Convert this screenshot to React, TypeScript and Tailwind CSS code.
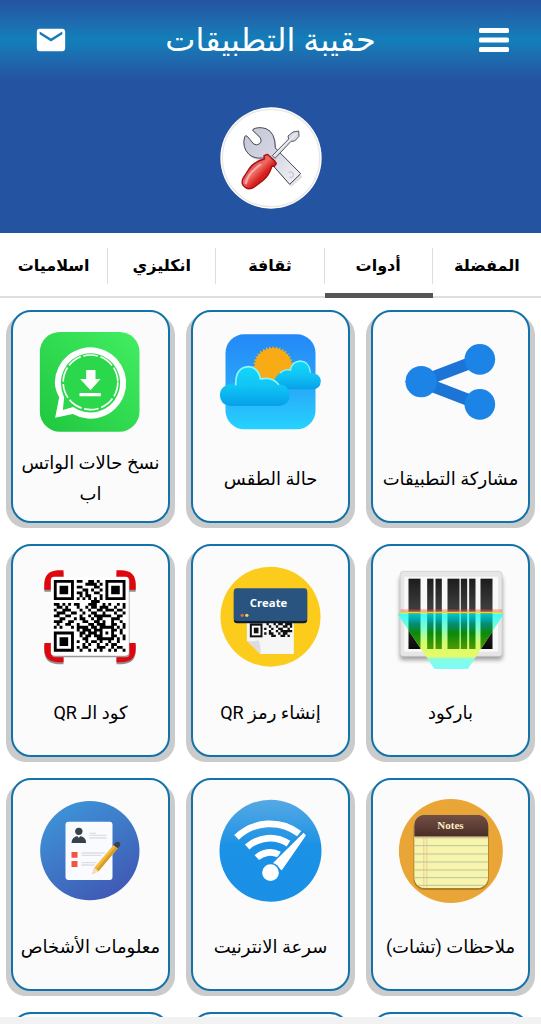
import React, { useState } from 'react';
import { MdMail } from 'react-icons/md';

interface Tool {
  id: string;
  label: string;
  icon: React.FC;
}

const TABS = ['المفضلة', 'أدوات', 'ثقافة', 'انكليزي', 'اسلاميات'];

const QR_ROWS = [
  '1111111011001101001111111',
  '1000001000011110101000001',
  '1011101011000011001011101',
  '1011101000110100101011101',
  '1011101011010011001011101',
  '1000001001011000101000001',
  '1111111010101010101111111',
  '0000000000000111000000000',
  '1101010110001110010100101',
  '0110100010010110111001001',
  '1001110001001001101110110',
  '0111001100100110010001001',
  '1100110001001011111100110',
  '0011000101100101100011100',
  '1110011000110011010010010',
  '0100110010001101110011001',
  '1010001011110110111110101',
  '0000000010111011100011010',
  '1111111001101110101010010',
  '1000001001011011100011001',
  '1011101000110001111110101',
  '1011101010010110100100100',
  '1011101000101001001011000',
  '1000001010110001110010110',
  '1111111001001010100101001',
];

const qrPath = (rows: string[], x: number, y: number, size: number) =>
  rows
    .map((row, r) =>
      row
        .split('')
        .map((c, i) => (c === '1' ? `M${x + i * size} ${y + r * size}h${size}v${size}h-${size}z` : ''))
        .join('')
    )
    .join('');

const MenuIcon = () => (
  <svg viewBox="0 0 30 24" className="w-[30px] h-6 fill-white">
    <rect y="0" width="30" height="5" rx="1.5" />
    <rect y="9.5" width="30" height="5" rx="1.5" />
    <rect y="19" width="30" height="5" rx="1.5" />
  </svg>
);

const ToolsBadge = () => (
  <svg viewBox="30 34 306 306" className="w-[102px] h-[102px]">
    <defs>
      <linearGradient id="steel" x1="0" y1="0" x2="1" y2="1">
        <stop offset="0" stopColor="#c3c5d6" />
        <stop offset=".5" stopColor="#d5d6e2" />
        <stop offset="1" stopColor="#f4f4fa" />
      </linearGradient>
      <linearGradient id="handle" x1="0" y1="0" x2="1" y2="1">
        <stop offset="0" stopColor="#c8151a" />
        <stop offset=".45" stopColor="#ee6b62" />
        <stop offset=".6" stopColor="#d8211f" />
        <stop offset="1" stopColor="#a50c12" />
      </linearGradient>
    </defs>
    <circle cx="183" cy="187" r="152" fill="#fff" />
    <circle cx="183" cy="187" r="146" fill="none" stroke="#eae6e1" strokeWidth="4" />
    <path d="M104 126 Q97 158 117 178 Q133 193 158 190 L170 188 L240 270 L275 240 L196 160 Q197 112 168 100 Q145 92 129 101 Q127 107 132 109 L151 128 Q157 140 149 146 Q140 153 131 147 L112 124 Q108 120 104 126Z" fill="#999" opacity=".3" transform="translate(3 4)" />
    <path d="M104 123 Q95 155 117 176 Q133 190 158 187 L168 186 L239 266 L272 234 L196 157 Q196 110 168 99 Q145 92 129 101 Q126 105 132 108 L151 126 Q157 138 149 144 Q140 151 131 145 L112 122 Q107 118 104 123Z" fill="url(#steel)" stroke="#444650" strokeWidth="3" strokeLinejoin="round" />
    <path d="M236 232a8 8 0 1 1 2 12" fill="none" stroke="#c9c9d6" strokeWidth="4" />
    <path d="M187 180 L236 130 L234 121 L249 109 L266 106 L267 122 L254 136 L243 137 L195 188Z" fill="#d9dce2" stroke="#55585f" strokeWidth="3" strokeLinejoin="round" />
    <path d="M192 180 L245 127 L260 113" fill="none" stroke="#f7f7fa" strokeWidth="3" />
    <path d="M162 180 L172 176 L179 182 L195 197 L199 204 L193 212 L186 211 Q178 239 158 255 L133 274 Q119 284 107 276 Q91 266 99 248 L117 220 Q133 197 163 190Z" fill="url(#handle)" stroke="#a50c14" strokeWidth="4" strokeLinejoin="round" />
    <path d="M108 262 Q112 235 151 207" fill="none" stroke="#fff" strokeWidth="7" strokeLinecap="round" opacity=".45" />
  </svg>
);

const StatusSaverIcon = () => (
  <svg viewBox="115.5 93 312 312" className="w-[104px] h-[104px]">
    <defs>
      <linearGradient id="green" x1="1" y1="0" x2="0" y2="1">
        <stop offset="0" stopColor="#43ee62" />
        <stop offset="1" stopColor="#1fc73f" />
      </linearGradient>
    </defs>
    <rect x="118" y="96" width="299" height="299" rx="60" fill="url(#green)" />
    <path d="M176 292 Q163 268 163 247 A107 107 0 1 1 217 342 L164 353Z" fill="#fff" />
    <path d="M191 293 Q181 270 181 247 A89 89 0 1 1 218 321 L187 330Z" fill="#2bd84c" />
    <circle cx="270" cy="247" r="82" fill="none" stroke="#fff" strokeWidth="5" strokeDasharray="44 8" />
    <path d="M257 210h28v27h15l-30 34-31-34h18z M237 279h64v10h-64z" fill="#fff" />
  </svg>
);

const SUN_RAYS = Array.from({ length: 36 }, (_, i) => i * 10);

const WeatherIcon = () => (
  <svg viewBox="115.5 93 312 312" className="w-[104px] h-[104px]">
    <defs>
      <linearGradient id="sky" x1="0" y1="0" x2="0" y2="1">
        <stop offset="0" stopColor="#2388f8" />
        <stop offset=".5" stopColor="#2aa3f8" />
        <stop offset="1" stopColor="#25d2ff" />
      </linearGradient>
      <linearGradient id="cloud" x1="0" y1="0" x2="0" y2="1">
        <stop offset="0" stopColor="#12d8fb" />
        <stop offset=".5" stopColor="#10c4f4" />
        <stop offset="1" stopColor="#06a0e8" />
      </linearGradient>
    </defs>
    <rect x="135" y="103" width="270" height="285" rx="56" fill="url(#sky)" />
    <circle cx="278" cy="200" r="55" fill="#f8ab14" />
    {SUN_RAYS.map(a => (
      <path key={a} d="M273 148l5-10 5 10z" fill="#f8ab14" transform={`rotate(${a} 278 200)`} />
    ))}
    <path d="M285 268 Q270 240 300 217 Q315 205 330 210 Q334 184 360 183 Q386 184 390 218 Q419 219 421 243 Q420 267 396 268Z" fill="url(#cloud)" />
    <path d="M298 219 Q315 205 330 210 Q334 184 360 183 Q386 184 390 218" fill="none" stroke="#8ff4fb" strokeWidth="4" />
    <path d="M150 318 Q119 315 118 285 Q119 253 165 249 Q165 201 204 199 Q236 201 242 235 Q275 228 296 253 Q327 255 328 285 Q326 316 296 318Z" fill="url(#cloud)" />
    <path d="M166 256 Q163 202 204 200 Q233 202 240 237 Q275 229 295 254" fill="none" stroke="#8ff4fb" strokeWidth="5" />
  </svg>
);

const ShareIcon = () => (
  <svg viewBox="115.5 93 312 312" className="w-[104px] h-[104px]">
    <path d="M358 178L182 245L358 313" fill="none" stroke="#1b74d6" strokeWidth="36" />
    <g fill="#1c84e7">
      <circle cx="182" cy="245" r="47" />
      <circle cx="358" cy="178" r="46" />
      <circle cx="358" cy="313" r="46" />
    </g>
  </svg>
);

const QrCodeIcon = () => (
  <svg viewBox="115.5 75 312 312" className="w-[104px] h-[104px]">
    {['#8f8f8f', '#e0060e'].map((color, i) => (
      <g key={color} fill="none" stroke={color} strokeWidth="21" transform={i ? '' : 'translate(0 6)'}>
        <path d="M189 101H172Q142 103 142 132V149" />
        <path d="M348 101H365Q395 103 395 132V149" />
        <path d="M189 356H172Q142 354 142 326V309" />
        <path d="M348 356H365Q395 354 395 326V309" />
      </g>
    ))}
    <rect x="154" y="114" width="233" height="238" rx="10" fill="#999" />
    <rect x="151" y="110" width="234" height="237" rx="10" fill="#fff" />
    <path d={qrPath(QR_ROWS, 160, 120, 8.6)} fill="#000" />
  </svg>
);

const CreateQrIcon = () => (
  <svg viewBox="115.5 75 312 312" className="w-[104px] h-[104px]">
    <circle cx="270" cy="230" r="150" fill="#fccc1d" />
    <path d="M199 240H340V342H240L199 302Z" fill="#f7f6f7" />
    <path d="M199 302Q225 306 234 300Q241 315 240 342Z" fill="#dddcdf" />
    <path d={qrPath(QR_ROWS.slice(8, 15).map(r => r.slice(7, 19)), 251, 242, 7)} fill="#111" />
    <path d="M208 250H246V292H208Z" fill="#111" />
    <path d="M214 257H240V286H214Z" fill="#fff" />
    <path d="M220 263H234V280H220Z" fill="#111" />
    <rect x="160" y="150" width="220" height="100" rx="10" fill="#101c29" />
    <rect x="160" y="145" width="220" height="98" rx="9" fill="#29547f" />
    <circle cx="185" cy="226" r="5" fill="#dc6b4a" />
    <circle cx="199" cy="226" r="5" fill="#f3d54b" />
    <text x="264" y="200" textAnchor="middle" className="fill-white font-['Open_Sans',sans-serif] text-[34px] font-bold">Create</text>
  </svg>
);

const BARS = [
  [144, 36],
  [200, 19],
  [225, 19],
  [261, 36],
  [301, 19],
  [326, 19],
  [360, 36],
];

const BarcodeIcon = () => (
  <svg viewBox="115.5 75 312 312" className="w-[104px] h-[104px] overflow-visible">
    <defs>
      <linearGradient id="beam" x1="0" y1="0" x2="0" y2="1">
        <stop offset="0" stopColor="#3ffbfb" />
        <stop offset=".25" stopColor="#7dfcd0" />
        <stop offset=".5" stopColor="#d3fb72" />
        <stop offset=".77" stopColor="#e6fc66" />
        <stop offset=".82" stopColor="#84fbe6" />
        <stop offset="1" stopColor="#7dfcf6" />
      </linearGradient>
      <linearGradient id="beamBars" x1="0" y1="0" x2="0" y2="1">
        <stop offset="0" stopColor="#00c4cf" />
        <stop offset=".3" stopColor="#068a72" />
        <stop offset=".55" stopColor="#0b8a08" />
        <stop offset="1" stopColor="#4f9a05" />
      </linearGradient>
      <linearGradient id="ink" x1="0" y1="0" x2="0" y2="1">
        <stop offset="0" stopColor="#1c1c1c" />
        <stop offset=".4" stopColor="#3c3c3c" />
        <stop offset="1" stopColor="#0a0a0a" />
      </linearGradient>
      <clipPath id="beamShape">
        <path d="M111 222H430L322 387H222Z" />
      </clipPath>
      <filter id="soft">
        <feGaussianBlur stdDeviation="6" />
      </filter>
    </defs>
    <rect x="118" y="110" width="308" height="250" rx="10" fill="#777" filter="url(#soft)" opacity=".7" />
    <rect x="119" y="94" width="306" height="255" rx="10" fill="#e6e6e6" stroke="#c9c9c9" strokeWidth="2" />
    <rect x="131" y="110" width="282" height="225" fill="#f8f8f8" />
    {BARS.map(([x, w]) => (
      <rect key={x} x={x} y="116" width={w} height="211" fill="url(#ink)" />
    ))}
    <rect x="120" y="208" width="305" height="8" fill="#f55" opacity=".45" />
    <rect x="115" y="215" width="312" height="6" fill="#c9e04c" />
    <g clipPath="url(#beamShape)">
      <rect x="111" y="222" width="319" height="165" fill="url(#beam)" />
      {BARS.map(([x, w]) => (
        <rect key={x} x={x} y="222" width={w} height="105" fill="url(#beamBars)" />
      ))}
    </g>
  </svg>
);

const PeopleIcon = () => (
  <svg viewBox="115.5 75 312 312" className="w-[104px] h-[104px]">
    <defs>
      <linearGradient id="peopleBg" x1=".1" y1="0" x2=".7" y2="1">
        <stop offset="0" stopColor="#3d98da" />
        <stop offset="1" stopColor="#4059b4" />
      </linearGradient>
    </defs>
    <circle cx="268" cy="230" r="149" fill="url(#peopleBg)" />
    <rect x="195" y="143" width="141" height="175" rx="9" fill="#fafbfe" />
    <circle cx="235" cy="172" r="11" fill="#37424f" />
    <path d="M213 207Q213 187 235 186Q257 187 257 207Z" fill="#37424f" />
    <path d="M231 186h8l-4 6z" fill="#fff" />
    <path d="M213 234h18v17h-18zM213 261h18v18h-18z" fill="#ef5540" />
    <path d="M267 178h20M267 184h51M267 192h51M243 237h71M243 244h60M243 266h45M243 273h40" stroke="#dcdee4" strokeWidth="4" />
    <path d="M275 301L281 281L339 213L352 223L294 292Z" fill="#f2bd3c" />
    <path d="M288 286L345 218L352 223L294 292Z" fill="#dc9c29" />
    <path d="M275 301L281 281L294 292Z" fill="#f4dccb" />
    <path d="M339 213L346 205Q353 201 358 206Q361 211 358 216L352 223Z" fill="#3c4150" />
  </svg>
);

const SpeedIcon = () => (
  <svg viewBox="115.5 75 312 312" className="w-[104px] h-[104px]">
    <defs>
      <linearGradient id="speedBg" x1="0" y1="0" x2="0" y2="1">
        <stop offset="0" stopColor="#56a9e4" />
        <stop offset=".45" stopColor="#1b92e6" />
        <stop offset="1" stopColor="#1990e6" />
      </linearGradient>
    </defs>
    <circle cx="270" cy="230" r="153" fill="url(#speedBg)" />
    <g fill="none" stroke="#fff" strokeWidth="20">
      <path d="M168 190A145 145 0 0 1 356 179" />
      <path d="M200 219A102 102 0 0 1 324 209" />
      <path d="M229 251A58 58 0 0 1 296 242" />
    </g>
    <path d="M274 268L369 173L379 184L304 292Z" fill="#fff" stroke="#1b92e6" strokeWidth="4" />
    <circle cx="270" cy="296" r="30" fill="#1b92e6" />
    <circle cx="270" cy="296" r="25" fill="#fff" />
  </svg>
);

const NotesIcon = () => (
  <svg viewBox="115.5 75 312 312" className="w-[104px] h-[104px]">
    <defs>
      <linearGradient id="leather" x1="0" y1="0" x2="0" y2="1">
        <stop offset="0" stopColor="#735044" />
        <stop offset="1" stopColor="#4b2d27" />
      </linearGradient>
      <clipPath id="pad">
        <rect x="161" y="122" width="222" height="220" rx="32" />
      </clipPath>
    </defs>
    <circle cx="271" cy="231" r="156" fill="#eaa537" />
    <rect x="159" y="128" width="226" height="220" rx="34" fill="#8a6022" opacity=".6" />
    <g clipPath="url(#pad)">
      <rect x="161" y="122" width="222" height="220" fill="#f8f4ae" />
      <rect x="161" y="122" width="222" height="66" fill="url(#leather)" />
      <path d="M161 191H383" stroke="#d3cf94" strokeWidth="5" />
      <path d="M161 215H383M161 240H383M161 264H383M161 288H383M161 311H383M161 334H383" stroke="#b4c69b" strokeWidth="3" />
      <path d="M190 192V342M199 192V342" stroke="#e3b98a" strokeWidth="2" />
    </g>
    <text x="270" y="166" textAnchor="middle" className="fill-[#fbeec4] font-['Liberation_Serif',serif] text-[33px] font-bold">Notes</text>
  </svg>
);

const TOOLS: Tool[] = [
  { id: 'share', label: 'مشاركة التطبيقات', icon: ShareIcon },
  { id: 'weather', label: 'حالة الطقس', icon: WeatherIcon },
  { id: 'status', label: 'نسخ حالات الواتس اب', icon: StatusSaverIcon },
  { id: 'barcode', label: 'باركود', icon: BarcodeIcon },
  { id: 'create-qr', label: 'إنشاء رمز QR', icon: CreateQrIcon },
  { id: 'qr', label: 'كود الـ QR', icon: QrCodeIcon },
  { id: 'notes', label: 'ملاحظات (تشات)', icon: NotesIcon },
  { id: 'speed', label: 'سرعة الانترنيت', icon: SpeedIcon },
  { id: 'people', label: 'معلومات الأشخاص', icon: PeopleIcon },
];

const CARD = 'h-[213px] rounded-[20px] border-2 border-[#1273aa] bg-[#fbfbfb] shadow-[-5px_5px_0_#cbcbcb,5px_5px_0_#cbcbcb]';

const ToolCard: React.FC<{ tool: Tool }> = ({ tool }) => {
  const Icon = tool.icon;
  return (
    <button className={`${CARD} flex flex-col items-center px-1 pt-[19px]`}>
      <Icon />
      <span className="mt-[11px] h-16 flex items-center text-center text-[18px] leading-[31px] text-black">
        {tool.label}
      </span>
    </button>
  );
};

export default function App() {
  const [active, setActive] = useState(1);

  return (
    <div dir="rtl" className="h-screen flex flex-col bg-white font-[Roboto,'DejaVu_Sans',sans-serif]">
      <header className="shrink-0 bg-[#2453a1]">
        <div className="h-20 px-8 flex items-center justify-between bg-linear-to-b from-[#2453a1] via-[#127fba] to-[#2453a1]">
          <button aria-label="القائمة" className="w-9 flex">
            <MenuIcon />
          </button>
          <h1 className="text-[32px] leading-10 text-white">حقيبة التطبيقات</h1>
          <button aria-label="البريد" className="w-9 flex">
            <MdMail size={34} className="text-white" />
          </button>
        </div>
        <div className="pt-[27px] pb-6 flex justify-center">
          <ToolsBadge />
        </div>
      </header>

      <nav className="shrink-0 h-[65px] grid grid-cols-5 border-b-2 border-[#dedede]">
        {TABS.map((tab, i) => (
          <button
            key={tab}
            onClick={() => setActive(i)}
            className={`-mb-0.5 flex flex-col pt-[15px] ${i === active ? 'border-b-5 border-[#555]' : ''}`}
          >
            <span className={`w-full h-9 flex items-center justify-center text-[16px] font-bold text-black ${i > 0 ? 'border-r border-[#dedede]' : ''}`}>
              {tab}
            </span>
          </button>
        ))}
      </nav>

      <main className="flex-1 min-h-0 overflow-y-auto [scrollbar-width:none] px-[11px] pt-3 pb-5 grid grid-cols-3 gap-[21px] content-start">
        {TOOLS.map(tool => (
          <ToolCard key={tool.id} tool={tool} />
        ))}
        <div className={CARD} />
        <div className={CARD} />
        <div className={CARD} />
      </main>

      <footer className="shrink-0 h-[7px] bg-[#f2f2f2]" />
    </div>
  );
}
